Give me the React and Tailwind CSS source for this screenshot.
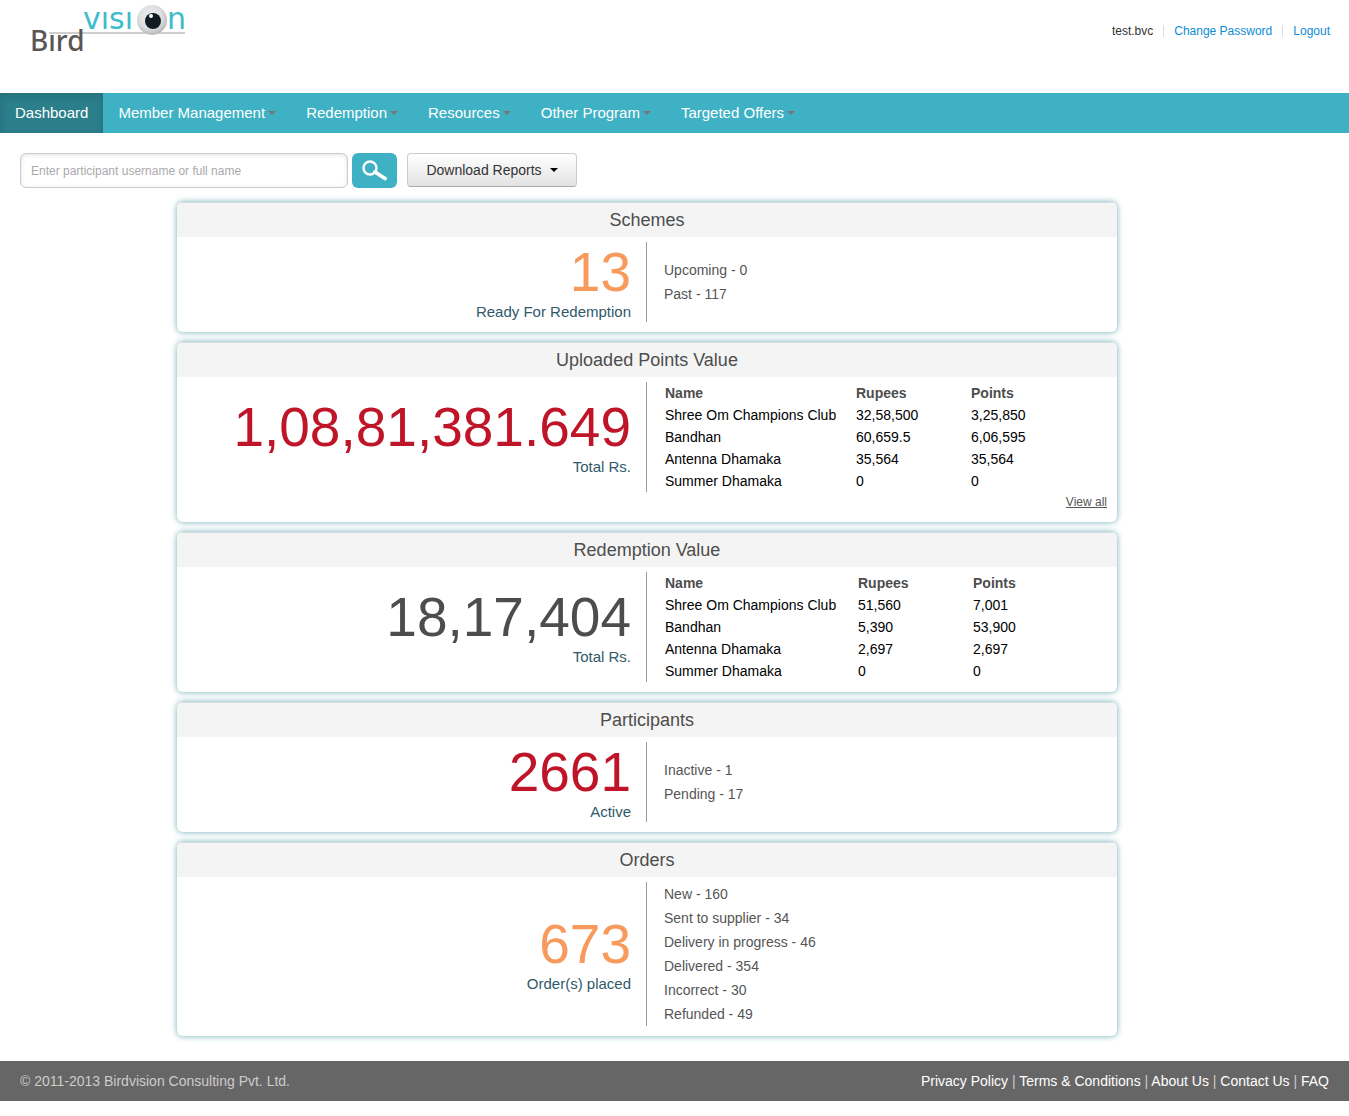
const menus = ['Member Management', 'Redemption', 'Resources', 'Other Program', 'Targeted Offers'];
const footerLinks = ['Privacy Policy', 'Terms & Conditions', 'About Us', 'Contact Us', 'FAQ'];

const uploaded = [
  ['Shree Om Champions Club', '32,58,500', '3,25,850'],
  ['Bandhan', '60,659.5', '6,06,595'],
  ['Antenna Dhamaka', '35,564', '35,564'],
  ['Summer Dhamaka', '0', '0'],
];
const redeemed = [
  ['Shree Om Champions Club', '51,560', '7,001'],
  ['Bandhan', '5,390', '53,900'],
  ['Antenna Dhamaka', '2,697', '2,697'],
  ['Summer Dhamaka', '0', '0'],
];

function Logo() {
  return (
    <svg width="170" height="60" viewBox="0 0 170 60" className="overflow-visible" role="img" aria-label="Bird Vision">
      <defs>
        <radialGradient id="ball" cx="45%" cy="40%" r="60%">
          <stop offset="0%" stopColor="#f0f0f0" />
          <stop offset="65%" stopColor="#dedee0" />
          <stop offset="100%" stopColor="#b8b8bc" />
        </radialGradient>
      </defs>
      <rect x="27" y="32" width="136" height="2" fill="#cfcdcd" />
      <g fontFamily="'Noto Sans', sans-serif" fontSize="28" fontWeight="500" fill="#5b5656">
        <text x="8" y="51">Bırd</text>
      </g>
      <g fontFamily="'DejaVu Sans', sans-serif" fontSize="30" fill="#3dbccb">
        <text x="61" y="29">vısı</text>
        <text x="145" y="29">n</text>
      </g>
      <circle cx="130" cy="20" r="15" fill="url(#ball)" />
      <circle cx="131" cy="21" r="8" fill="#101b22" />
      <circle cx="129" cy="16" r="2" fill="#fff" />
    </svg>
  );
}

function Caret({ className }) {
  return (
    <svg width="8" height="4" viewBox="0 0 8 4" className={className} aria-hidden="true">
      <path d="M0 0h8L4 4z" fill="currentColor" />
    </svg>
  );
}

function Card({ title, value, valueClass, label, footer, children }) {
  return (
    <section className="overflow-hidden rounded-md bg-white pb-[10px] shadow-[0_0_6px_#6fabb5]">
      <h2 className="mb-[5px] h-[35px] border-t border-[#d3dfe1] bg-[#f4f4f4] text-center text-lg leading-[35px] text-[#4d4d4d]">{title}</h2>
      <div className="grid grid-cols-2">
        <div className="flex flex-col justify-center border-r border-[#999] pr-[15px] text-right">
          <div className={`text-[55px] leading-[60px] ${valueClass}`}>{value}</div>
          <div className="text-[15px] leading-5 text-[#2f5a6b]">{label}</div>
        </div>
        <div className="flex min-h-20 flex-col justify-center pl-[17px]">{children}</div>
      </div>
      {footer}
    </section>
  );
}

function StatList({ items }) {
  return (
    <ul className="text-sm leading-6 text-[#555]">
      {items.map((item) => <li key={item}>{item}</li>)}
    </ul>
  );
}

function PointsTable({ rows, nameWidth }) {
  return (
    <table className="ml-px table-fixed self-start text-left text-sm leading-[22px] text-black">
      <thead className="text-[#4d4d4d]">
        <tr>
          <th scope="col" className={`p-0 font-bold ${nameWidth}`}>Name</th>
          <th scope="col" className="w-[115px] p-0 font-bold">Rupees</th>
          <th scope="col" className="w-[115px] p-0 font-bold">Points</th>
        </tr>
      </thead>
      <tbody>
        {rows.map((row) => (
          <tr key={row[0]}>{row.map((cell, i) => <td key={i} className="p-0 whitespace-nowrap">{cell}</td>)}</tr>
        ))}
      </tbody>
    </table>
  );
}

export default function App() {
  return (
    <div className="bg-white font-['Liberation_Sans',Arial,sans-serif] text-[#333]">
      <header className="flex h-[93px] items-start justify-between pr-[19px] pl-[22px]">
        <a href="#home"><Logo /></a>
        <div className="flex items-center pt-[21px] text-xs leading-5">
          <span>test.bvc</span>
          <span className="mx-[10px] h-3 w-px bg-[#ddd]" />
          <a href="#password" className="text-[#0e8bd6]">Change Password</a>
          <span className="mx-[10px] h-3 w-px bg-[#ddd]" />
          <a href="#logout" className="text-[#0e8bd6]">Logout</a>
        </div>
      </header>

      <nav className="flex bg-[#3eb1c4] text-[15px] leading-10 text-white">
        <a href="#dashboard" className="bg-[#2b7f8b] px-[15px] shadow-[inset_0_3px_8px_rgba(0,0,0,0.125)]">Dashboard</a>
        {menus.map((name) => (
          <button key={name} type="button" className="flex items-center px-[15px]">
            {name}
            <Caret className="ml-[3px] text-[#777]" />
          </button>
        ))}
      </nav>

      <form className="flex items-start px-5 pt-5" onSubmit={(e) => e.preventDefault()}>
        <input
          type="text"
          aria-label="Participant"
          placeholder="Enter participant username or full name"
          className="h-[35px] w-[328px] rounded-md border border-[#ccc] px-[10px] text-xs shadow-[inset_0_1px_4px_rgba(0,0,0,0.12)] placeholder:text-[#aaa]"
        />
        <button type="submit" aria-label="Search" className="ml-1 flex h-[35px] w-[45px] items-center justify-center rounded-md bg-[#3eb1c4]">
          <svg width="25" height="21" viewBox="0 0 25 21" fill="none" stroke="#fff">
            <circle cx="8" cy="8" r="6.500" strokeWidth="2.300" />
            <path d="M13 12L23 18.500" strokeWidth="3.800" strokeLinecap="round" />
          </svg>
        </button>
        <button type="button" className="ml-[10px] flex h-[34px] w-[170px] items-center justify-center rounded border border-[#ccc] border-b-[#aaa] bg-linear-to-b from-white to-[#e2e2e2] text-sm text-[#333]">
          Download Reports
          <Caret className="ml-2 text-black" />
        </button>
      </form>

      <main className="pt-[14px] pr-[55px] pb-[25px]">
        <div className="mx-auto flex max-w-[940px] flex-col gap-[10px]">
          <Card title="Schemes" value="13" valueClass="text-[#f79a5c]" label="Ready For Redemption">
            <StatList items={['Upcoming - 0', 'Past - 117']} />
          </Card>
          <Card
            title="Uploaded Points Value"
            value="1,08,81,381.649"
            valueClass="text-[#bf1528]"
            label="Total Rs."
            footer={
              <div className="pr-[10px] text-right text-xs leading-5 text-[#555]">
                <a href="#all" className="underline">View all</a>
              </div>
            }
          >
            <PointsTable rows={uploaded} nameWidth="w-[191px]" />
          </Card>
          <Card title="Redemption Value" value="18,17,404" valueClass="text-[#4d4d4d]" label="Total Rs.">
            <PointsTable rows={redeemed} nameWidth="w-[193px]" />
          </Card>
          <Card title="Participants" value="2661" valueClass="text-[#bf1528]" label="Active">
            <StatList items={['Inactive - 1', 'Pending - 17']} />
          </Card>
          <Card title="Orders" value="673" valueClass="text-[#f79a5c]" label="Order(s) placed">
            <StatList
              items={['New - 160', 'Sent to supplier - 34', 'Delivery in progress - 46', 'Delivered - 354', 'Incorrect - 30', 'Refunded - 49']}
            />
          </Card>
        </div>
      </main>

      <footer className="mb-[15px] flex justify-between bg-[#666] px-5 text-sm leading-10 text-[#ccc]">
        <p>© 2011-2013 Birdvision Consulting Pvt. Ltd.</p>
        <p>
          {footerLinks.map((name, i) => (
            <span key={name}>
              {i > 0 && ' | '}
              <a href="#info" className="text-white">{name}</a>
            </span>
          ))}
        </p>
      </footer>
    </div>
  );
}
